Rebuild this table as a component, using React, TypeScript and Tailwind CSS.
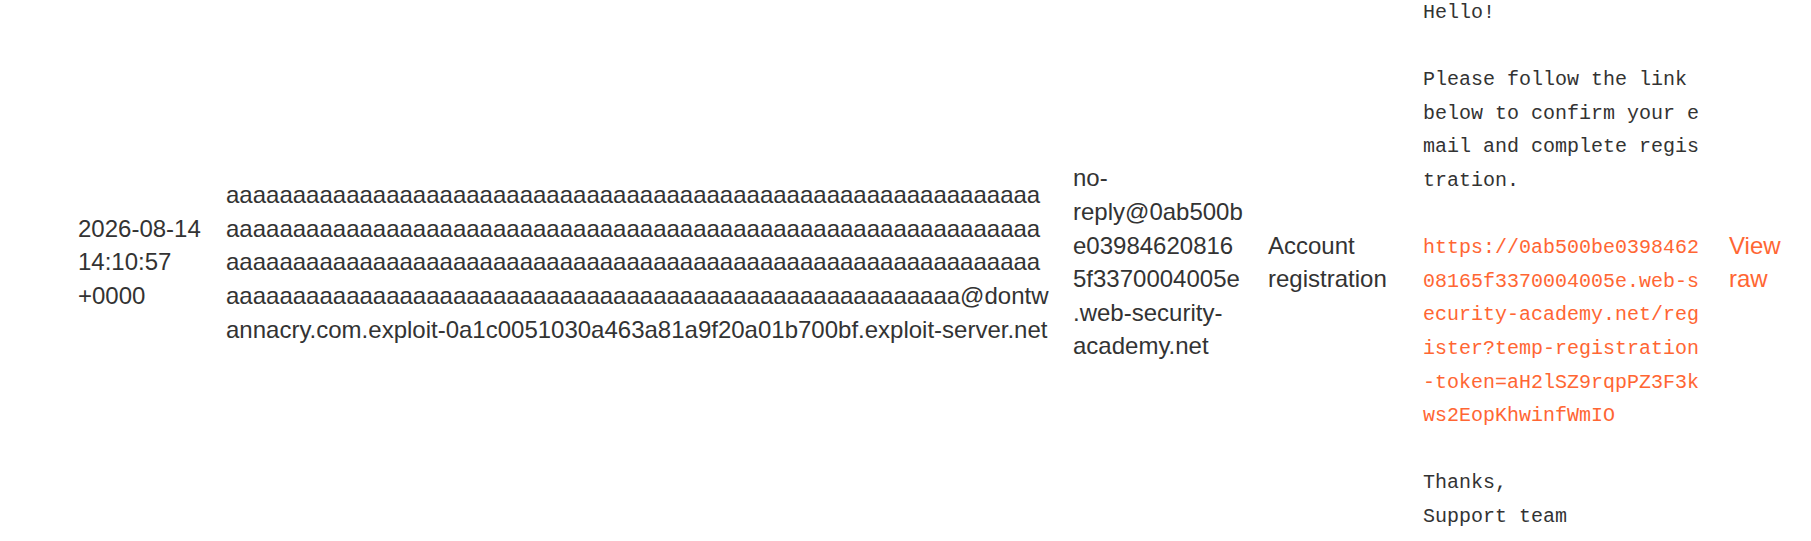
import React from "react";

const A = "a".repeat(238);
const TO = `${A}@dontwannacry.com.exploit-0a1c0051030a463a81a9f20a01b700bf.exploit-server.net`;
const FROM = "no-reply@0ab500be039846208165f3370004005e.web-security-academy.net";
const URL =
  "https://0ab500be039846208165f3370004005e.web-security-academy.net/register?temp-registration-token=aH2lSZ9rqpPZ3F3kws2EopKhwinfWmIO";

export default function App() {
  return (
    <div className="w-full h-[541px] overflow-hidden bg-white text-[#333333] font-['Liberation_Sans',Arial,sans-serif] text-[24px] leading-[33.6px]">
      <div className="-mt-[9px] flex items-center pl-[78px]">
        <div className="w-[148px] shrink-0 pr-[20px]">2026-08-14 14:10:57 +0000</div>
        <div className="w-[847px] shrink-0">
          <div className="w-[826px] break-all">{TO}</div>
        </div>
        <div className="w-[195px] shrink-0">
          <div className="w-[171px] [overflow-wrap:break-word]">{FROM}</div>
        </div>
        <div className="w-[155px] shrink-0 pr-[30px]">Account registration</div>
        <div className="w-[306px] shrink-0 pt-[5px]">
          <pre className="m-0 w-[280px] whitespace-pre-wrap break-all font-['Liberation_Mono','Courier_New',monospace] text-[20px] leading-[33.6px] text-[#333333]">
            {"Hello!\n\nPlease follow the link below to confirm your email and complete registration.\n\n"}
            <a href="#" className="text-[#ff6633] no-underline">
              {URL}
            </a>
            {"\n\nThanks,\nSupport team"}
          </pre>
        </div>
        <div className="w-[60px] shrink-0">
          <a href="#" className="text-[#ff6633] no-underline">
            View raw
          </a>
        </div>
      </div>
    </div>
  );
}
